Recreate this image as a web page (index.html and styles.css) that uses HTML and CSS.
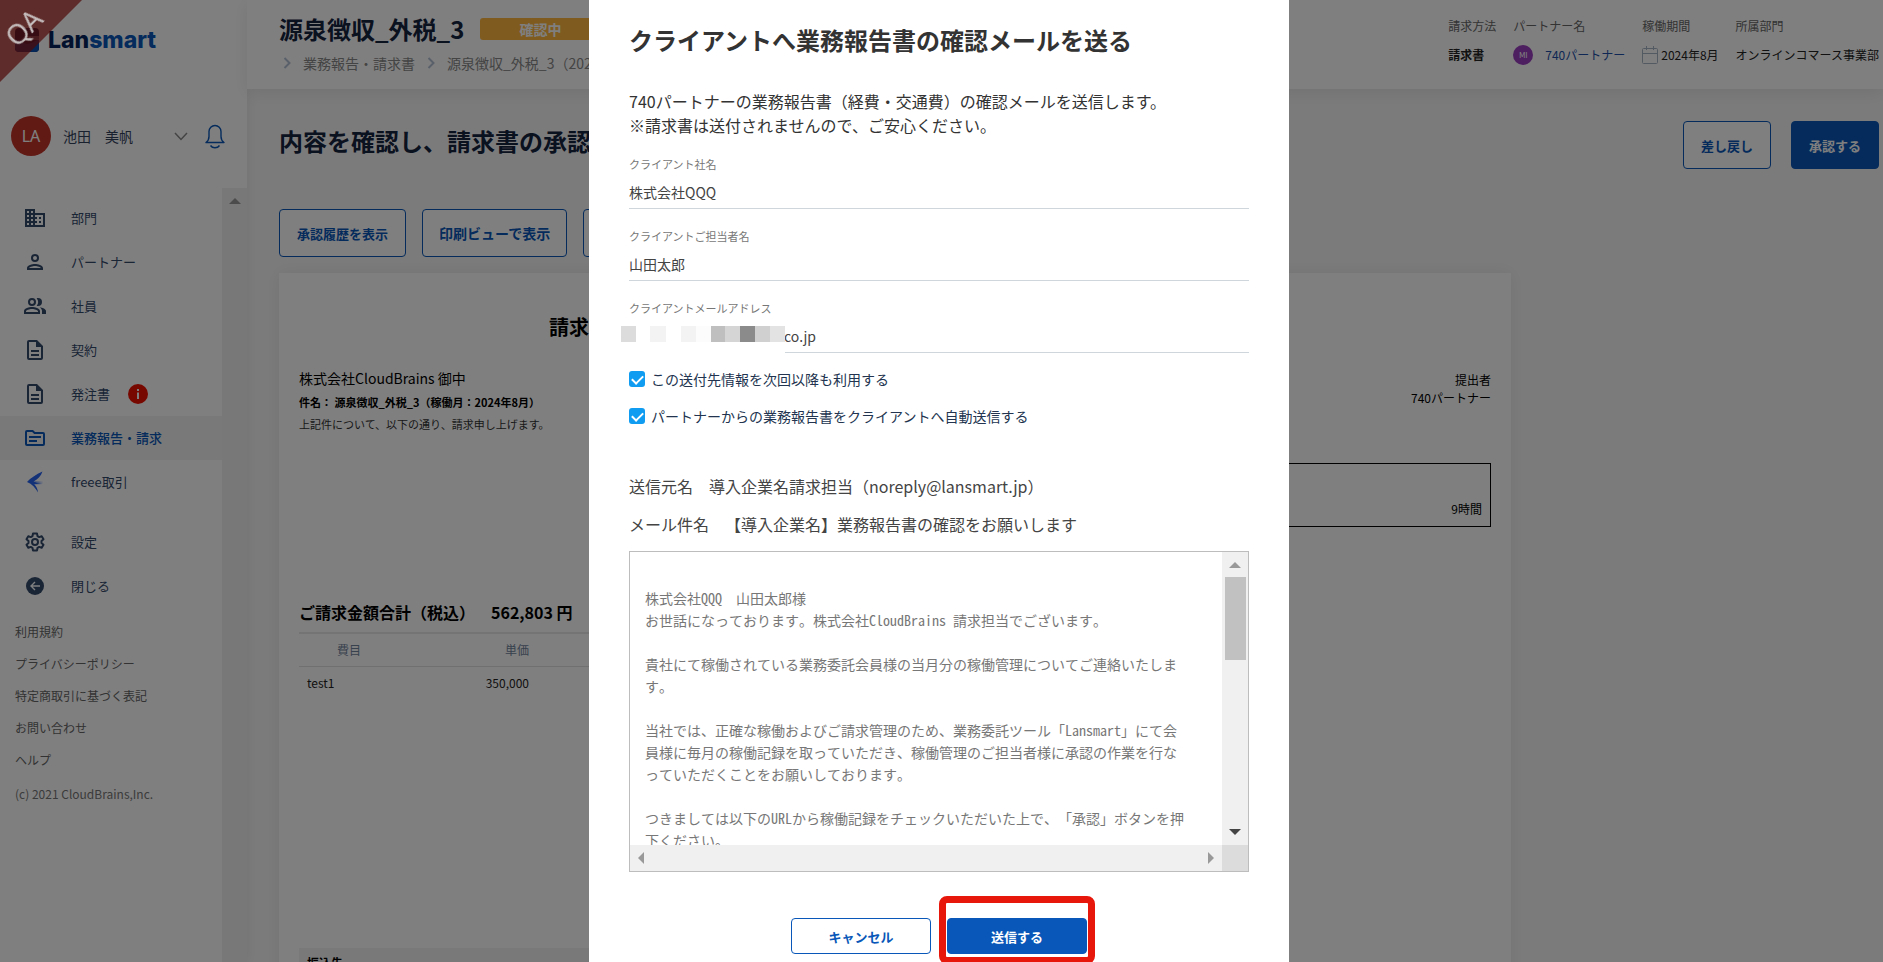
FILE: index.html
```html
<!DOCTYPE html>
<html lang="ja">
<head>
<meta charset="utf-8">
<title>Lansmart</title>
<link rel="stylesheet" href="styles.css">
</head>
<body>
<div class="app">
  <aside class="sidebar">
    <div class="brand">
      <svg class="brand-mark" width="24" height="24" viewBox="0 0 24 24" aria-hidden="true"><rect width="24" height="24" rx="4" fill="#062a66"/><path d="M0 12c5-1 8 4 12 4s8-3 12-5v9a4 4 0 0 1-4 4H4a4 4 0 0 1-4-4z" fill="#0a4fae"/><rect x="12" y="8" width="12" height="4" fill="#fff" opacity=".5"/></svg>
      <span class="brand-name">Lan<span class="brand-accent">smart</span></span>
    </div>
    <div class="user">
      <span class="avatar">LA</span>
      <span class="user-name">池田　美帆</span>
      <button class="icon-button" aria-label="メニュー"><svg width="14" height="9" viewBox="0 0 14 9"><path d="M1 1l6 6.500 6-6.500" fill="none" stroke="#888" stroke-width="1.500"/></svg></button>
      <button class="icon-button bell" aria-label="通知"><svg width="20" height="25" viewBox="0 0 20 25" fill="none" stroke="#0957b8" stroke-width="1.400"><path d="M1 18.500h18c-2-1.500-3-3.500-3-6V7.500a6 6 0 0 0-12 0v5c0 2.500-1 4.500-3 6z" stroke-linejoin="round"/><path d="M5.500 21.500c2 3 7 3 9 0"/></svg></button>
    </div>
    <div class="side-scroll">
      <div class="side-content">
        <nav class="menu">
          <a class="menu-item" href="#"><svg viewBox="0 0 24 24"><path d="M12 7V3H2v18h20V7H12zM6 19H4v-2h2v2zm0-4H4v-2h2v2zm0-4H4V9h2v2zm0-4H4V5h2v2zm4 12H8v-2h2v2zm0-4H8v-2h2v2zm0-4H8V9h2v2zm0-4H8V5h2v2zm10 12h-8v-2h2v-2h-2v-2h2v-2h-2V9h8v10zm-2-8h-2v2h2v-2zm0 4h-2v2h2v-2z"/></svg>部門</a>
          <a class="menu-item" href="#"><svg viewBox="0 0 24 24"><path d="M12 6a2 2 0 1 1 0 4 2 2 0 0 1 0-4m0 10c2.700 0 5.800 1.290 6 2H6c.230-.720 3.310-2 6-2m0-12a4 4 0 1 0 0 8 4 4 0 0 0 0-8zm0 10c-2.670 0-8 1.340-8 4v2h16v-2c0-2.660-5.330-4-8-4z"/></svg>パートナー</a>
          <a class="menu-item" href="#"><svg viewBox="0 0 24 24"><path d="M16.670 13.130C18.040 14.060 19 15.320 19 17v3h4v-3c0-2.180-3.570-3.470-6.330-3.870zM15 12a4 4 0 0 0 0-8c-.470 0-.910.100-1.330.240a5.980 5.980 0 0 1 0 7.520c.420.140.860.240 1.330.240zM9 12a4 4 0 1 0 0-8 4 4 0 0 0 0 8zm0-6a2 2 0 1 1 0 4 2 2 0 0 1 0-4zm0 7c-2.670 0-8 1.340-8 4v3h16v-3c0-2.660-5.330-4-8-4zm6 5H3v-.990C3.200 16.290 6.300 15 9 15s5.800 1.290 6 2v1z"/></svg>社員</a>
          <a class="menu-item" href="#"><svg viewBox="0 0 24 24"><path d="M8 16h8v2H8zm0-4h8v2H8zm6-10H6a2 2 0 0 0-2 2v16a2 2 0 0 0 2 2h12a2 2 0 0 0 2-2V8l-6-6zm4 18H6V4h7v5h5v11z"/></svg>契約</a>
          <a class="menu-item" href="#"><svg viewBox="0 0 24 24"><path d="M8 16h8v2H8zm0-4h8v2H8zm6-10H6a2 2 0 0 0-2 2v16a2 2 0 0 0 2 2h12a2 2 0 0 0 2-2V8l-6-6zm4 18H6V4h7v5h5v11z"/></svg>発注書<svg class="alert" viewBox="0 0 20 20"><circle cx="10" cy="10" r="10"/><path class="alert-i" d="M9 5h2v2H9zM9 8.500h2V15H9z"/></svg></a>
          <a class="menu-item active" href="#"><svg viewBox="0 0 24 24"><path d="M20 6h-8l-2-2H4a2 2 0 0 0-2 2v12a2 2 0 0 0 2 2h16a2 2 0 0 0 2-2V8a2 2 0 0 0-2-2zm0 12H4V6h5.170l2 2H20v10zm-2-6H6v-2h12v2zm-4 4H6v-2h8v2z"/></svg>業務報告・請求</a>
          <a class="menu-item freee" href="#"><svg viewBox="0 0 24 24"><path d="M19.500 1.500C13 4.500 7.500 8 4 12c5 2 8.500 6 11 10.500-.200-3-1.500-6-3.800-8.200L20 14l-8-1.200 8.500-.800-10-.500c4-2 7.500-5.500 9-10z"/></svg>freee取引</a>
        </nav>
        <nav class="menu secondary">
          <a class="menu-item" href="#"><svg viewBox="0 0 24 24" fill="none"><path fill="none" stroke="#33496b" stroke-width="2" stroke-linejoin="round" d="M10 3.500h4l.500 2.600 1.700 1 2.500-.900 1.800 3.100-2 1.700v2l2 1.700-1.800 3.100-2.500-.900-1.700 1-.500 2.600h-4l-.500-2.600-1.700-1-2.500.900-1.800-3.100 2-1.700v-2l-2-1.700 1.800-3.100 2.500.900 1.700-1z"/><circle cx="12" cy="12" r="3" fill="none" stroke="#33496b" stroke-width="2"/></svg>設定</a>
          <a class="menu-item" href="#"><svg viewBox="0 0 24 24"><circle cx="12" cy="12" r="9"/><path d="M17 12H8M12 8l-4 4 4 4" fill="none" stroke="#fff" stroke-width="1.400"/></svg>閉じる</a>
        </nav>
        <nav class="legal">
          <a href="#">利用規約</a>
          <a href="#">プライバシーポリシー</a>
          <a href="#">特定商取引に基づく表記</a>
          <a href="#">お問い合わせ</a>
          <a href="#">ヘルプ</a>
          <small>(c) 2021 CloudBrains,Inc.</small>
        </nav>
      </div>
      <div class="side-bar"><i class="arrow up"></i></div>
    </div>
  </aside>

  <div class="main">
    <header class="topbar">
      <div class="heading">
        <div class="heading-row"><h1>源泉徴収_外税_3</h1><span class="status">確認中</span></div>
        <nav class="crumbs">
          <svg width="8" height="12" viewBox="0 0 8 12"><path d="M1.500 1l5 5-5 5"/></svg><a href="#">業務報告・請求書</a>
          <svg width="8" height="12" viewBox="0 0 8 12"><path d="M1.500 1l5 5-5 5"/></svg><a href="#">源泉徴収_外税_3（2024年8月）</a>
        </nav>
      </div>
      <dl class="facts">
        <div><dt>請求方法</dt><dd><b>請求書</b></dd></div>
        <div><dt>パートナー名</dt><dd class="partner"><span class="mini-avatar">MI</span><a href="#">740パートナー</a></dd></div>
        <div><dt>稼働期間</dt><dd class="period"><svg width="16" height="18" viewBox="0 0 16 18" fill="none" stroke="#a9b4c4"><rect x=".5" y="2.500" width="15" height="15" rx="1"/><path d="M.5 7.500h15M4.500 0v4M11.500 0v4"/></svg>2024年8月</dd></div>
        <div><dt>所属部門</dt><dd>オンラインコマース事業部</dd></div>
      </dl>
    </header>

    <section class="content">
      <div class="lead">
        <h2>内容を確認し、請求書の承認</h2>
        <div class="actions"><button class="btn">差し戻し</button><button class="btn primary">承認する</button></div>
      </div>
      <div class="tools"><button class="btn">承認履歴を表示</button><button class="btn wide">印刷ビューで表示</button><button class="btn blank" aria-label="その他"></button></div>

      <article class="invoice">
        <h3>請求書</h3>
        <div class="parties">
          <div>
            <p class="client">株式会社CloudBrains 御中</p>
            <p class="subject">件名： 源泉徴収_外税_3（稼働月：2024年8月）</p>
            <p class="note">上記件について、以下の通り、請求申し上げます。</p>
          </div>
          <p class="issuer">提出者<br>740パートナー</p>
        </div>
        <div class="hours">9時間</div>
        <p class="total"><span>ご請求金額合計（税込）</span><span>562,803 円</span></p>
        <table class="lines">
          <thead><tr><th class="item">費目</th><th class="price">単価</th><th></th></tr></thead>
          <tbody><tr><td class="item">test1</td><td class="price">350,000</td><td></td></tr></tbody>
        </table>
        <div class="bank">振込先</div>
      </article>
    </section>
  </div>
</div>

<div class="overlay">
  <form class="modal" role="dialog" aria-labelledby="dialog-title">
    <h2 id="dialog-title">クライアントへ業務報告書の確認メールを送る</h2>
    <p class="intro">740パートナーの業務報告書（経費・交通費）の確認メールを送信します。<br>※請求書は送付されませんので、ご安心ください。</p>
    <div class="field"><label for="company">クライアント社名</label><input id="company" type="text" value="株式会社QQQ"></div>
    <div class="field"><label for="person">クライアントご担当者名</label><input id="person" type="text" value="山田太郎"></div>
    <div class="field masked"><label for="mail">クライアントメールアドレス</label><input id="mail" type="text" value="co.jp">
      <div class="mosaic" aria-hidden="true"><i class="m1"></i><i></i><i class="m2"></i><i></i><i class="m2"></i><i class="m3"></i><i class="m4"></i><i class="m5"></i><i class="m6"></i><i class="m7"></i><i class="m8"></i></div>
    </div>
    <label class="check"><input type="checkbox" checked>この送付先情報を次回以降も利用する</label>
    <label class="check"><input type="checkbox" checked>パートナーからの業務報告書をクライアントへ自動送信する</label>
    <div class="mail-meta">
      <p>送信元名　導入企業名請求担当（noreply@lansmart.jp）</p>
      <p>メール件名　【導入企業名】業務報告書の確認をお願いします</p>
    </div>
    <div class="mail-box">
      <textarea aria-label="メール本文" readonly>

株式会社QQQ　山田太郎様
お世話になっております。株式会社CloudBrains 請求担当でございます。

貴社にて稼働されている業務委託会員様の当月分の稼働管理についてご連絡いたしま
す。

当社では、正確な稼働およびご請求管理のため、業務委託ツール「Lansmart」にて会
員様に毎月の稼働記録を取っていただき、稼働管理のご担当者様に承認の作業を行な
っていただくことをお願いしております。

つきましては以下のURLから稼働記録をチェックいただいた上で、「承認」ボタンを押
下ください。</textarea>
      <div class="bar-v"><i class="arrow up"></i><span class="thumb"></span><i class="arrow down"></i></div>
      <div class="bar-h"><i class="arrow left"></i><i class="arrow right"></i></div>
      <div class="bar-corner"></div>
    </div>
    <div class="modal-actions"><button type="button" class="btn">キャンセル</button><span class="marked"><button type="button" class="btn primary">送信する</button></span></div>
  </form>
</div>
<div class="ribbon"><span>QA</span></div>
</body>
</html>
```
FILE: styles.css
```css
* { box-sizing: border-box; }
body {
  margin: 0;
  height: 100vh;
  overflow: hidden;
  background: #f7f7f7;
  color: #222;
  font: 12px/18px "Noto Sans CJK JP", sans-serif;
  text-spacing-trim: space-all;
}
h1, h2, h3, p, dl, dd { margin: 0; }
a { color: inherit; text-decoration: none; }
button, input, textarea { font-family: inherit; }

.app { display: flex; height: 100vh; }

/* Sidebar */
.sidebar {
  flex: none;
  width: 247px;
  display: flex;
  flex-direction: column;
  background: #fff;
  box-shadow: 0 0 12px rgba(0, 0, 0, .08);
}
.brand { display: flex; align-items: center; gap: 9px; height: 80px; padding-left: 15px; }
.brand-name { font: 800 23px/24px Inter, sans-serif; color: #04245c; }
.brand-accent { color: #0957b8; }
.user { display: flex; align-items: center; height: 108px; padding: 4px 22px 0 11px; }
.avatar {
  width: 40px; height: 40px; border-radius: 50%;
  background: #c5352a; color: #fff;
  font: 16px/40px "Noto Sans", sans-serif; text-align: center;
}
.user-name { flex: 1; padding-left: 12px; font-size: 14px; color: #33415c; }
.icon-button { display: flex; padding: 0; border: 0; background: none; }
.bell { margin-left: 17px; }
.side-scroll { flex: 1; display: flex; }
.side-content { flex: 1; padding-top: 8px; }
.side-bar { width: 25px; padding-top: 10px; background: #f0f0f0; }
.side-bar .arrow { margin: 0 auto; }
.menu { margin-bottom: 16px; }
.menu.secondary { margin-bottom: 8px; }
.menu-item { display: flex; align-items: center; height: 44px; padding-left: 23px; color: #33496b; font-size: 13px; }
.menu-item svg { width: 24px; height: 24px; margin-right: 24px; fill: #33496b; }
.menu-item.active { background: #f3f3f3; color: #0957b8; font-weight: 500; }
.menu-item.active svg { fill: #0957b8; }
.menu-item.freee svg { fill: #2864f0; }
.menu-item .alert { width: 20px; height: 20px; margin: 0 0 0 18px; fill: #ee1100; }
.menu-item .alert-i { fill: #fff; }
.legal { display: flex; flex-direction: column; padding-left: 15px; color: #666; }
.legal a { height: 32px; line-height: 32px; }
.legal small { font-size: 12px; line-height: 36px; color: #777; }

/* Page */
.main { flex: 1; min-width: 0; display: flex; flex-direction: column; }
.topbar {
  flex: none;
  height: 89px;
  display: flex;
  justify-content: space-between;
  padding: 11px 4px 0 32px;
  background: #fff;
  box-shadow: 0 4px 16px rgba(0, 0, 0, .08);
}
.heading-row { display: flex; align-items: center; gap: 16px; height: 36px; }
h1 { font-size: 24px; line-height: 36px; font-weight: 700; color: #14233f; }
.status { width: 120px; border-radius: 3px; background: #ffb63f; color: #fff; font-size: 14px; line-height: 22px; font-weight: 700; text-align: center; }
.crumbs { display: flex; align-items: center; gap: 12px; padding: 5px 0 0 4px; font-size: 14px; color: #888; }
.crumbs a { line-height: 22px; }
.crumbs svg { fill: none; stroke: #b4c0d4; stroke-width: 2; }
.facts { display: flex; gap: 17px; padding-top: 6px; }
.facts dt { color: #666; }
.facts dd { height: 20px; margin-top: 10px; line-height: 20px; white-space: nowrap; }
.partner, .period { display: flex; align-items: center; }
.partner { gap: 12px; color: #1c4fa8; }
.period { gap: 3px; }
.mini-avatar { width: 20px; height: 20px; border-radius: 50%; background: #9c3fc0; color: #fff; font-size: 8px; text-align: center; }

.btn {
  height: 48px;
  padding: 0 17px;
  border: 1px solid #0957b8;
  border-radius: 4px;
  background: #fff;
  color: #0957b8;
  font-size: 13px;
  font-weight: 700;
  white-space: nowrap;
}
.btn.wide { padding: 0 16px; font-size: 14px; }
.btn.blank { width: 120px; }
.btn.primary { background: #0957b8; color: #fff; }
.content { padding: 32px 4px 0 32px; }
.lead { display: flex; justify-content: space-between; }
.lead h2 { font-size: 24px; line-height: 40px; font-weight: 700; color: #14233f; }
.actions { display: flex; gap: 20px; }
.tools { display: flex; gap: 16px; padding-top: 40px; }

.invoice {
  max-width: 1232px;
  margin-top: 16px;
  padding: 40px 20px 0;
  background: #fff;
  color: #000;
  box-shadow: 0 0 16px rgba(0, 0, 0, .07);
}
.invoice h3 { padding-left: 250px; font-size: 20px; line-height: 28px; font-weight: 700; }
.parties { display: flex; justify-content: space-between; height: 122px; padding-top: 25px; }
.client { font-size: 14px; line-height: 24px; }
.subject { font-size: 11px; line-height: 24px; font-weight: 700; }
.note { font-size: 11px; line-height: 20px; color: #333; }
.issuer { padding-top: 5px; text-align: right; }
.hours { height: 64px; margin-left: 50%; padding: 36px 8px 0; border: 1px solid #000; text-align: right; }
.total { display: flex; gap: 16px; margin-top: 70px; padding-bottom: 5px; font-size: 16px; line-height: 30px; font-weight: 700; }
.lines { width: 75%; border-collapse: collapse; border-top: 2px solid #e8e8e8; }
.lines th { height: 33px; padding: 0; border-bottom: 1px solid #e0e0e0; font-weight: 400; color: #71839c; }
.lines td { height: 34px; padding: 0; color: #222; }
.lines .item { width: 100px; }
.lines td.item { padding-left: 8px; }
.lines .price { width: 130px; text-align: right; }
.bank { width: 75%; height: 40px; margin-top: 248px; padding: 6px 8px; background: #f3f3f3; font-weight: 700; }

/* Dialog */
.overlay { position: fixed; inset: 0; display: flex; justify-content: center; background: rgba(0, 0, 0, .5); }
.modal { width: 700px; margin-right: 5px; padding: 22px 40px 0; background: #fff; color: #333; overflow: hidden; }
.modal h2 { font-size: 24px; line-height: 36px; font-weight: 700; }
.intro { margin-top: 31px; font-size: 16px; line-height: 24px; }
.field { height: 54px; margin-top: 18px; border-bottom: 1px solid #cfd6dc; }
.field label { display: block; font-size: 11px; line-height: 18px; color: #777; }
.field input { width: 100%; height: 24px; margin-top: 7px; padding: 0; border: 0; outline: 0; background: none; color: #444; font-size: 14px; display: block; }
.masked { position: relative; margin-bottom: 14px; }
.masked input { padding-left: 155px; }
.mosaic { position: absolute; left: -8px; top: 27px; display: flex; width: 164px; height: 28px; background: #fff; }
.mosaic i { width: 15px; height: 16px; }
.mosaic .m2, .mosaic .m7 { width: 16px; }
.m1 { background: #dcdcdc; }
.m2 { background: #f3f3f3; }
.m3 { background: #fcfcfc; }
.m4 { background: #bfbfbf; }
.m5 { background: #d5d5d5; }
.m6 { background: #8b8b8b; }
.m7 { background: #d0d0d0; }
.m8 { background: #e3e3e3; }
.check { display: flex; align-items: center; gap: 6px; height: 24px; margin-bottom: 13px; font-size: 14px; color: #22344f; }
.check input {
  appearance: none;
  width: 16px; height: 16px; margin: 0;
  border-radius: 3px;
  background: #109cf1;
  display: grid;
  place-items: center;
}
.check input::after { content: ""; width: 5px; height: 9px; margin-bottom: 2px; border: solid #fff; border-width: 0 2px 2px 0; transform: rotate(45deg); }
.mail-meta { padding-top: 26px; font-size: 16px; line-height: 38px; color: #444; }
.mail-box {
  display: grid;
  grid-template-columns: 1fr 26px;
  grid-template-rows: 293px 26px;
  margin-top: 8px;
  border: 1px solid #bdbdbd;
}
.mail-box textarea {
  height: 293px;
  padding: 13px 0 0 15px;
  border: 0;
  outline: 0;
  resize: none;
  overflow: hidden;
  white-space: pre;
  background: #fff;
  color: #777;
  font: 14px/22px "Noto Sans Mono CJK JP", "Noto Sans CJK JP", monospace;
  text-spacing-trim: space-all;
}
.bar-v { display: flex; flex-direction: column; align-items: center; padding: 10px 0; background: #f0f0f0; }
.thumb { width: 21px; height: 83px; margin-top: 9px; background: #c1c1c1; }
.bar-v .down { margin-top: auto; }
.bar-h { display: flex; align-items: center; justify-content: space-between; padding: 0 8px; background: #f0f0f0; }
.bar-corner { background: #dcdcdc; }
.arrow { display: block; width: 0; height: 0; border: 6px solid transparent; }
.arrow.up { border-top: 0; border-bottom-color: #999; }
.arrow.down { border-bottom: 0; border-top-color: #444; }
.arrow.left { border-left: 0; border-right-color: #999; }
.arrow.right { border-right: 0; border-left-color: #999; }
.modal-actions { display: flex; justify-content: center; gap: 16px; padding-top: 46px; }
.modal-actions .btn { width: 140px; height: 36px; }
.marked { position: relative; }
.marked::after { content: ""; position: absolute; inset: -22px -8px -10px; border: 7px solid #e8170b; border-radius: 8px; pointer-events: none; }

/* Environment ribbon */
.ribbon {
  position: fixed;
  top: 0; left: 0;
  width: 82px; height: 82px;
  clip-path: polygon(0 0, 100% 0, 0 100%);
  background: rgba(80, 8, 6, .7);
}
.ribbon span { position: absolute; left: 1px; top: 12px; width: 44px; color: #c4bcbc; font: 28px/30px "Noto Sans", sans-serif; text-align: center; transform: rotate(-45deg); }
```
